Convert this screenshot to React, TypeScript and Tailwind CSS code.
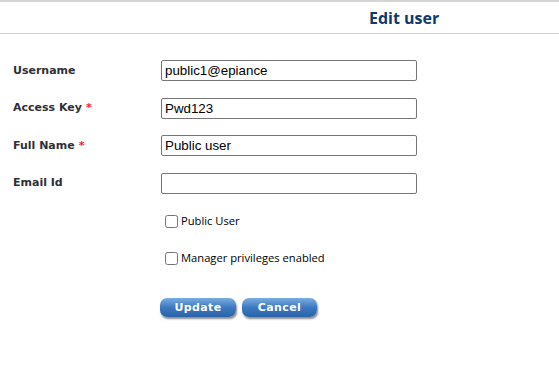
import { useState } from 'react';

const labelClass = "w-[148px] shrink-0 text-[11px] font-bold text-[#2f2f38] font-['DejaVu_Sans',sans-serif]";
const inputClass =
  "h-[21px] w-[256px] rounded-[2px] border border-[#767676] bg-white px-[3px] text-[13.33px] text-black font-['Liberation_Sans',Arial,sans-serif] outline-none";
const buttonClass =
  "h-[19px] rounded-[7px] bg-gradient-to-b from-[#7aaee0] via-[#3d78c0] to-[#2a63a8] text-[11px] font-bold text-white font-['DejaVu_Sans',sans-serif] tracking-[0.4px] shadow-[1px_2px_2px_rgba(0,0,0,0.45)] leading-none";

const Required = () => <span className="ml-[4px] text-[#ff1744]">*</span>;

const EditUser = () => {
  const [username, setUsername] = useState('public1@epiance');
  const [accessKey, setAccessKey] = useState('Pwd123');
  const [fullName, setFullName] = useState('Public user');
  const [email, setEmail] = useState('');
  const [publicUser, setPublicUser] = useState(false);
  const [manager, setManager] = useState(false);

  return (
    <div className="min-h-screen bg-white">
      {/* header */}
      <div className="h-[34px] border-t-[2px] border-b border-[#d4d4d4] pl-[369px] flex items-center">
        <h1 className="text-[16px] font-bold text-[#0f3a6a] font-['Open_Sans',sans-serif] leading-none">
          Edit user
        </h1>
      </div>

      <form className="pl-[13px] pt-[26px]" onSubmit={(e) => e.preventDefault()}>
        <div className="flex flex-col gap-[16.5px]">
          <div className="flex items-center h-[21px]">
            <label className={labelClass + ' pt-[1px]'}>Username</label>
            <input className={inputClass} value={username} onChange={(e) => setUsername(e.target.value)} />
          </div>
          <div className="flex items-center h-[21px]">
            <label className={labelClass + ' pt-[1px]'}>
              Access Key<Required />
            </label>
            <input className={inputClass} value={accessKey} onChange={(e) => setAccessKey(e.target.value)} />
          </div>
          <div className="flex items-center h-[21px]">
            <label className={labelClass + ' pt-[1px]'}>
              Full Name<Required />
            </label>
            <input className={inputClass} value={fullName} onChange={(e) => setFullName(e.target.value)} />
          </div>
          <div className="flex items-center h-[21px]">
            <label className={labelClass + ' pt-[1px]'}>Email Id</label>
            <input className={inputClass} value={email} onChange={(e) => setEmail(e.target.value)} />
          </div>
        </div>

        <div className="pl-[152px] pt-[21px] flex flex-col gap-[23px] text-[11.2px] text-black font-['Open_Sans',sans-serif]">
          <label className="flex items-center gap-[3px] h-[14px]">
            <input
              type="checkbox"
              className="m-0 h-[13px] w-[13px]"
              checked={publicUser}
              onChange={(e) => setPublicUser(e.target.checked)}
            />
            Public User
          </label>
          <label className="flex items-center gap-[3px] h-[14px]">
            <input
              type="checkbox"
              className="m-0 h-[13px] w-[13px]"
              checked={manager}
              onChange={(e) => setManager(e.target.checked)}
            />
            Manager privileges enabled
          </label>
        </div>

        <div className="pl-[147px] pt-[32px] flex gap-[6px]">
          <button type="submit" className={buttonClass + ' w-[76px]'}>
            Update
          </button>
          <button type="button" className={buttonClass + ' w-[75px]'}>
            Cancel
          </button>
        </div>
      </form>
    </div>
  );
};

export default function App() {
  return <EditUser />;
}
